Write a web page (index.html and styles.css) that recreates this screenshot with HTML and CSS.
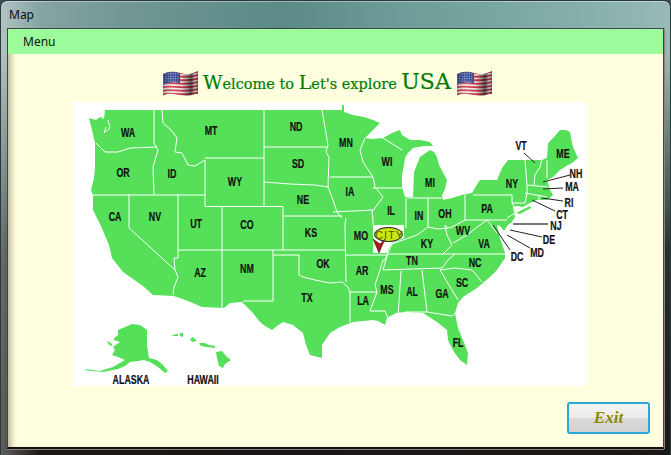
FILE: index.html
```html
<!DOCTYPE html>
<html lang="en">
<head>
  <meta charset="UTF-8" />
  <title>Map</title>
  <link rel="stylesheet" href="styles.css">
</head>
<body>
  <!-- shared flag drawing, used twice in the title -->
  <svg class="defs" width="0" height="0">
    <defs>
      <linearGradient id="flagShade" x1="0" x2="1" y1="0" y2="0">
        <stop offset="0" stop-color="#000" stop-opacity=".25" />
        <stop offset=".3" stop-color="#fff" stop-opacity=".1" />
        <stop offset=".55" stop-color="#000" stop-opacity=".05" />
        <stop offset=".8" stop-color="#000" stop-opacity=".6" />
        <stop offset=".92" stop-color="#000" stop-opacity=".2" />
        <stop offset="1" stop-color="#000" stop-opacity=".45" />
      </linearGradient>
      <pattern id="flagStars" width="2.4" height="2.4" patternUnits="userSpaceOnUse">
        <rect width="2.4" height="2.4" fill="#2f4390" />
        <rect width="1" height="1" fill="#c8d0ea" />
      </pattern>
      <clipPath id="flagClip">
        <path d="M0 3C4 1 9 0 13 1C18 2 23 4 27 3C30 2 33 1 35 0V23C31 23 27 25 22 25C17 25 10 22 5 23C3 23 1 24 0 25Z" />
      </clipPath>
      <symbol id="flag" viewBox="0 0 35 25">
        <g clip-path="url(#flagClip)">
          <rect width="35" height="25" fill="#f4f0f0" />
          <g class="flag-stripes">
            <path d="M0 2.5C6 -.5 20 5 35 .5" />
            <path d="M0 6C6 3 20 8.500 35 4" />
            <path d="M0 9.500C6 6.500 20 12 35 7.500" />
            <path d="M0 13C6 10 20 15.500 35 11" />
            <path d="M0 16.500C6 13.500 20 19 35 14.500" />
            <path d="M0 20C6 17 20 22.500 35 18" />
            <path d="M0 23.500C6 20.500 20 26 35 21.500" />
          </g>
          <path d="M0 3C4 1 9 0 13 1L17 2V12L13 11.500C8 11 4 12 0 14Z" fill="url(#flagStars)" />
          <rect width="35" height="25" fill="url(#flagShade)" />
        </g>
      </symbol>
    </defs>
  </svg>

  <div class="window">
    <div class="titlebar">Map</div>
    <div class="client">
      <div class="menubar"><span class="menu-item">Menu</span></div>

      <h1 class="welcome">
        <svg class="flag" width="35" height="25"><use href="#flag" /></svg>
        <span class="welcome-text"><span class="cap">W</span>elcome to <span class="cap">L</span>et's explore <span class="cap-big">USA</span></span>
        <svg class="flag" width="35" height="25"><use href="#flag" /></svg>
      </h1>

      <svg class="map" width="514" height="284" viewBox="73 102 514 284">
        <rect class="map-bg" x="73" y="102" width="514" height="284" />

        <!-- lower 48 outline -->
        <path class="land" d="M89 118L96 120L100 117L104 119L105 110H342L342 105L344 105L344 112L353 115L364 117L373 120L380 123L372 131L365 138L372 139L383 138L392 133L400 130L402 135L410 140L420 140L430 142L433 146L424 146L413 148L408 153L405 158L404 165L402 175L402 187L405 197L413 197L414 172L420 157L430 150L434 152L437 157L439 165L447 180L445 189L442 195L443 200L452 198L462 195L472 193L476 186L480 180L497 180L502 168L508 160H542L547 158L548 143L554 137L560 130L566 130L570 132L573 147L578 158L572 163L568 165L560 170L553 177L547 180L550 190L553 195L547 200L537 200L528 204L523 207L517 206L513 207L515 217L511 223L508 225L504 231L500 226L497 225L500 238L505 253L505 258L497 270L490 277L477 288L463 297L458 303L455 313L458 328L465 345L468 353L467 365L460 360L454 352L448 340L447 330L437 322L423 313L405 312L396 313L387 318L385 325L378 321L373 320L353 322L340 327L330 333L322 345L322 358L310 355L306 345L303 333L293 325L283 322L277 326L272 330L265 326L260 322L252 312L242 302L230 303L224 308L202 307L188 301L174 296L153 295L143 286L123 272L112 258L109 245L100 224L93 210L93 195L91 190L94 178L95 167L95 143L92 130Z" />
        <!-- long island -->
        <path class="land" d="M516 213L530 206L531 208L520 214Z" />

        <!-- state lines -->
        <path class="lines" d="M108 120L110 128L104 133L106 127M96 143L105 152L118 152L130 148L157 147M154 110V143L158 150L153 167L154 194M93 195H205M162 110L163 123L171 130L177 138L175 152L182 153L188 165L195 166L205 160V206M205 158H264M264 110V206M205 206.500H283M264 147H327M264 182L290 184L315 185L328 187M322 110L328 145L326 152L329 157L328 187L333 200L337 212L342 218M283 216H342M283 207V250M222 207V308M129 194V228L175 270M178 194V258H174L175 270L178 277L174 287L173 295M178 250H346M273 250V301H243M273 255H299V275L303 277L315 280L330 283L342 282L348 287L350 292V322M346 218L345 225L346 282M346 255H387L385 260L383 260L380 270L375 285L377 292L370 311H385L388 318M350 292H377M333 212L373 210M330 177H373M365 138L360 150L363 162L373 177L375 187L383 197L372 212L373 220V225M373 188H402M407 198H442M406 198V228M428 198V227M428 227L417 235L403 240L392 244L388 253L383 270M388 254H505M383 270L442 268L448 260L455 254M401 271L398 317M422 270L427 312M405 312H427L452 316L455 313M440 270L458 300M440 270L455 268L472 270L482 282M428 227L438 229L448 228L452 227L465 220V195M442 255L452 245L447 235L445 225L448 228M453 243L467 235L480 225L487 220L497 233M465 220H507M473 195H512V203L517 212L507 218M525 160L527 185V193L525 203L512 203M542 158L540 167L535 175L534 185M527 185L548 187M525 193L547 197M539 196V200M547 160V178M380 123L383 138M402 150L383 138" />

        <!-- alaska and hawaii -->
        <path class="land" d="M132 324L140 325L147 330L147 345L149 358L157 360L162 364L168 371L165 373L158 367L150 362L144 360L138 361L130 362L125 366L118 369L103 372L92 371L85 370L86 369L100 371L113 367L125 360L118 357L112 355L115 350L113 347L120 342L114 340L114 338L118 335L118 330Z" />
        <path class="land" d="M107 341L111 343L113 346L109 345Z" />
        <path class="land" d="M172 335L178 334L178 336L173 336ZM180 333L183 333L183 337L180 336Z" />
        <path class="land" d="M190 339L193 337L197 341L192 342ZM199 343L205 343L209 345L215 346L215 348L207 347L201 346Z" />
        <path class="land" d="M216 352L222 351L227 357L231 360L225 364L223 368L219 366L217 358Z" />

        <!-- leaders for the small states -->
        <path class="leader" d="M524 153L535 163M570 175L543 182M563 188L543 189M563 201L542 198M555 211L532 200M542 237L510 230M530 248L507 235M510 250L493 225" />
        <path class="leader-nj" d="M548 224H513" />

        <g class="state">
          <text x="128" y="137">WA</text>
          <text x="211" y="135">MT</text>
          <text x="296" y="131">ND</text>
          <text x="123" y="177">OR</text>
          <text x="172" y="178">ID</text>
          <text x="235" y="186">WY</text>
          <text x="298" y="168">SD</text>
          <text x="303" y="204">NE</text>
          <text x="115" y="221">CA</text>
          <text x="155" y="221">NV</text>
          <text x="196" y="228">UT</text>
          <text x="247" y="229">CO</text>
          <text x="311" y="237">KS</text>
          <text x="346" y="147">MN</text>
          <text x="387" y="166">WI</text>
          <text x="350" y="196">IA</text>
          <text x="430" y="187">MI</text>
          <text x="391" y="215">IL</text>
          <text x="361" y="240">MO</text>
          <text x="419" y="220">IN</text>
          <text x="445" y="218">OH</text>
          <text x="487" y="213">PA</text>
          <text x="512" y="188">NY</text>
          <text x="563" y="158">ME</text>
          <text x="521" y="150">VT</text>
          <text x="576" y="178">NH</text>
          <text x="572" y="191">MA</text>
          <text x="569" y="207">RI</text>
          <text x="562" y="219">CT</text>
          <text x="556" y="230">NJ</text>
          <text x="549" y="244">DE</text>
          <text x="537" y="257">MD</text>
          <text x="517" y="261">DC</text>
          <text x="463" y="235">WV</text>
          <text x="427" y="248">KY</text>
          <text x="484" y="248">VA</text>
          <text x="200" y="277">AZ</text>
          <text x="247" y="273">NM</text>
          <text x="323" y="268">OK</text>
          <text x="307" y="302">TX</text>
          <text x="362" y="275">AR</text>
          <text x="363" y="305">LA</text>
          <text x="387" y="294">MS</text>
          <text x="412" y="296">AL</text>
          <text x="442" y="298">GA</text>
          <text x="462" y="287">SC</text>
          <text x="412" y="265">TN</text>
          <text x="475" y="267">NC</text>
          <text x="458" y="347">FL</text>
          <text x="131" y="384">ALASKA</text>
          <text x="203" y="384">HAWAII</text>
        </g>

        <!-- selected city marker -->
        <path class="city-patch" d="M373 225H404V238L392 243L388 250V253H373Z" />
        <ellipse class="city-badge" cx="388.500" cy="234.500" rx="14" ry="7" />
        <text class="city-name" x="389.500" y="238.500">CITY</text>
        <path class="city-pin" d="M373 239L380 244L385 239L379 253Z" />
      </svg>

      <div class="footer">
        <button class="exit" type="button">Exit</button>
      </div>
    </div>
  </div>
</body>
</html>
```

FILE: styles.css
```css
html, body {
  margin: 0;
  height: 100%;
  overflow: hidden;
}
body {
  background: #3c5552;
  font-family: "Noto Sans", "Open Sans", Arial, sans-serif;
}
.defs {
  display: block;
  height: 0;
}
.window {
  box-sizing: border-box;
  height: 455px;
  display: flex;
  flex-direction: column;
  padding: 0 6px 6px;
  border: 1px solid #2a3a3a;
  border-bottom: none;
  border-radius: 7px 7px 0 0;
  background:
    linear-gradient(90deg, rgba(255,255,255,.3) 0, rgba(255,255,255,0) 6%),
    linear-gradient(180deg, rgba(0,0,0,0) 0, rgba(0,0,0,0) 12%, rgba(10,15,15,.8) 55%, rgba(20,15,15,.95) 100%),
    linear-gradient(90deg, #8ea9a8 0, #6f9693 20%, #5b8a87 42%, #6f9c98 60%, #83aea9 85%, #97bab5 100%);
  box-shadow: inset 0 1px 0 rgba(255,255,255,.4);
}
.titlebar {
  height: 27px;
  flex: none;
  font-size: 12px;
  line-height: 27px;
  color: #0a0a0a;
  padding-left: 2px;
}
.client {
  flex: 1;
  display: flex;
  flex-direction: column;
  background: #ffffe0;
  border: 1px solid #444;
  border-bottom: 2px solid #111;
  box-shadow: inset 7px 0 6px -4px rgba(90,90,60,.45), 0 1px 0 #8f8078, 1px 0 0 #8f8078;
}
.menubar {
  flex: none;
  height: 25px;
  background: #9cfc9c;
  font-size: 12px;
  line-height: 25px;
}
.menu-item {
  padding-left: 15px;
  color: #111;
}
.welcome {
  flex: none;
  height: 48px;
  margin: 0;
  padding: 17px 0 0 155px;
  box-sizing: border-box;
  display: flex;
  align-items: flex-start;
  gap: 2px;
  font-weight: normal;
  font-family: "DejaVu Serif", serif;
  font-size: 14.500px;
  color: #007c00;
  -webkit-text-stroke: .2px #007c00;
}
.welcome-text {
  line-height: 21px;
  white-space: nowrap;
  box-sizing: border-box;
  width: 255px;
  padding-left: 3px;
}
.cap {
  font-size: 19px;
}
.cap-big {
  font-size: 22px;
}
.flag {
  flex: none;
}
.flag-stripes path {
  fill: none;
  stroke: #d23a4a;
  stroke-width: 1.800;
}
.map {
  flex: none;
  display: block;
  margin-left: 65px;
}
.map-bg {
  fill: #fff;
}
.land {
  fill: #56e05a;
}
.lines {
  fill: none;
  stroke: #fff;
  stroke-width: 1;
}
.leader {
  fill: none;
  stroke: #222;
  stroke-width: 1;
}
.leader-nj {
  fill: none;
  stroke: #777;
  stroke-width: 2;
}
.state text {
  font-family: "Liberation Sans", Arial, sans-serif;
  font-weight: bold;
  font-size: 12px;
  text-anchor: middle;
  fill: #111;
  stroke: #111;
  stroke-width: .2;
  transform: scaleX(.74);
  transform-box: fill-box;
  transform-origin: center;
}
.city-patch {
  fill: #fff;
}
.city-badge {
  fill: #c8e614;
  stroke: #111;
  stroke-width: 1;
}
.city-name {
  font-family: "Liberation Sans", Arial, sans-serif;
  font-size: 11px;
  letter-spacing: 1px;
  text-anchor: middle;
  fill: #5a5a00;
}
.city-pin {
  fill: #b01818;
  stroke: #111;
  stroke-width: .5;
}
.footer {
  flex: 1;
  display: flex;
  justify-content: flex-end;
  align-items: flex-start;
  padding: 16px 13px 0 0;
}
.exit {
  width: 83px;
  height: 32px;
  border: 2px solid #2aa8d8;
  border-radius: 3px;
  background: linear-gradient(180deg, #f4f4f4 0, #ececec 48%, #d8d8d8 52%, #d2d2d2 100%);
  font-family: "Liberation Serif", serif;
  font-style: italic;
  font-weight: bold;
  font-size: 17px;
  color: #8b8b00;
  padding: 0;
}
```
